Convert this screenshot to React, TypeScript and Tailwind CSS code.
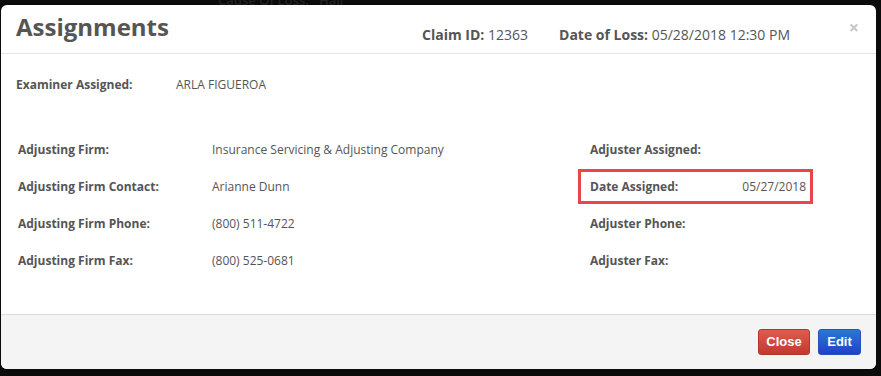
import React from 'react';

const leftRows = [
    { label: 'Adjusting Firm:', value: 'Insurance Servicing & Adjusting Company' },
    { label: 'Adjusting Firm Contact:', value: 'Arianne Dunn' },
    { label: 'Adjusting Firm Phone:', value: '(800) 511-4722' },
    { label: 'Adjusting Firm Fax:', value: '(800) 525-0681' },
];

const rightRows = [
    { label: 'Adjuster Assigned:', value: '', highlight: false },
    { label: 'Date Assigned:', value: '05/27/2018', highlight: true },
    { label: 'Adjuster Phone:', value: '', highlight: false },
    { label: 'Adjuster Fax:', value: '', highlight: false },
];

const App: React.FC = () => {
    return (
        <div className="w-[881px] h-[376px] bg-[#0b0b0b] overflow-hidden relative" style={{ fontFamily: '"Open Sans", "Noto Sans", sans-serif' }}>
            {/* page text peeking out behind the modal */}
            <div className="absolute left-[218px] top-[-8px] text-[13px] leading-[16px] text-[#222] font-semibold">Cause Of Loss:&nbsp;&nbsp;&nbsp;Hail</div>

            <div className="relative ml-[1px] mt-[5px] w-[875px] h-[364px] bg-white rounded-[6px] overflow-hidden flex flex-col">
                {/* header */}
                <div className="h-[49px] shrink-0 border-b border-[#e5e5e5] flex items-center pl-[15px] pr-[18px] relative">
                    <h2 className="text-[24px] font-bold text-[#555] leading-none mt-[-4px]">Assignments</h2>
                    <div className="ml-auto flex items-center gap-[31px] text-[14px] text-[#555] mr-[68px] mt-[10px]">
                        <span><b className="font-bold">Claim ID:</b> 12363</span>
                        <span><b className="font-bold">Date of Loss:</b> 05/28/2018 12:30 PM</span>
                    </div>
                    <button className="absolute right-[17px] top-[13px] text-[#c8c8c8] text-[18px] font-bold leading-none">×</button>
                </div>

                {/* body */}
                <div className="flex-1 text-[12px] text-[#555]">
                    <div className="flex items-center pl-[15px] pt-[22px] h-[40px]">
                        <span className="w-[160px] font-bold">Examiner Assigned:</span>
                        <span>ARLA FIGUEROA</span>
                    </div>

                    <div className="flex pl-[17px] pt-[37px]">
                        <div className="w-[560px] flex flex-col">
                            {leftRows.map(r => (
                                <div key={r.label} className="flex items-center h-[37px]">
                                    <span className="w-[194px] font-bold">{r.label}</span>
                                    <span>{r.value}</span>
                                </div>
                            ))}
                        </div>
                        <div className="w-[235px] flex flex-col">
                            {rightRows.map(r => (
                                <div key={r.label} className={r.highlight
                                    ? 'flex items-center h-[35px] my-[1px] pl-[9px] pr-[4px] border-[3px] border-[#e8464a]'
                                    : 'flex items-center h-[37px] pl-[12px] pr-[7px]'}>
                                    <span className="font-bold">{r.label}</span>
                                    <span className="ml-auto">{r.value}</span>
                                </div>
                            ))}
                        </div>
                    </div>
                </div>

                {/* footer */}
                <div className="h-[55px] shrink-0 border-t border-[#dcdcdc] bg-[#f4f4f4] flex items-center justify-end gap-[8px] pr-[15px]" style={{ fontFamily: '"Liberation Sans", Arial, sans-serif' }}>
                    <button className="w-[52px] h-[26px] rounded-[3px] border border-[#b8322c] bg-gradient-to-b from-[#e2594f] to-[#bf3a30] text-white text-[13px] font-bold">Close</button>
                    <button className="w-[43px] h-[26px] rounded-[3px] border border-[#2a4fbf] bg-gradient-to-b from-[#2a78d4] to-[#2340c9] text-white text-[13px] font-bold">Edit</button>
                </div>
            </div>
        </div>
    );
};

export default App;
